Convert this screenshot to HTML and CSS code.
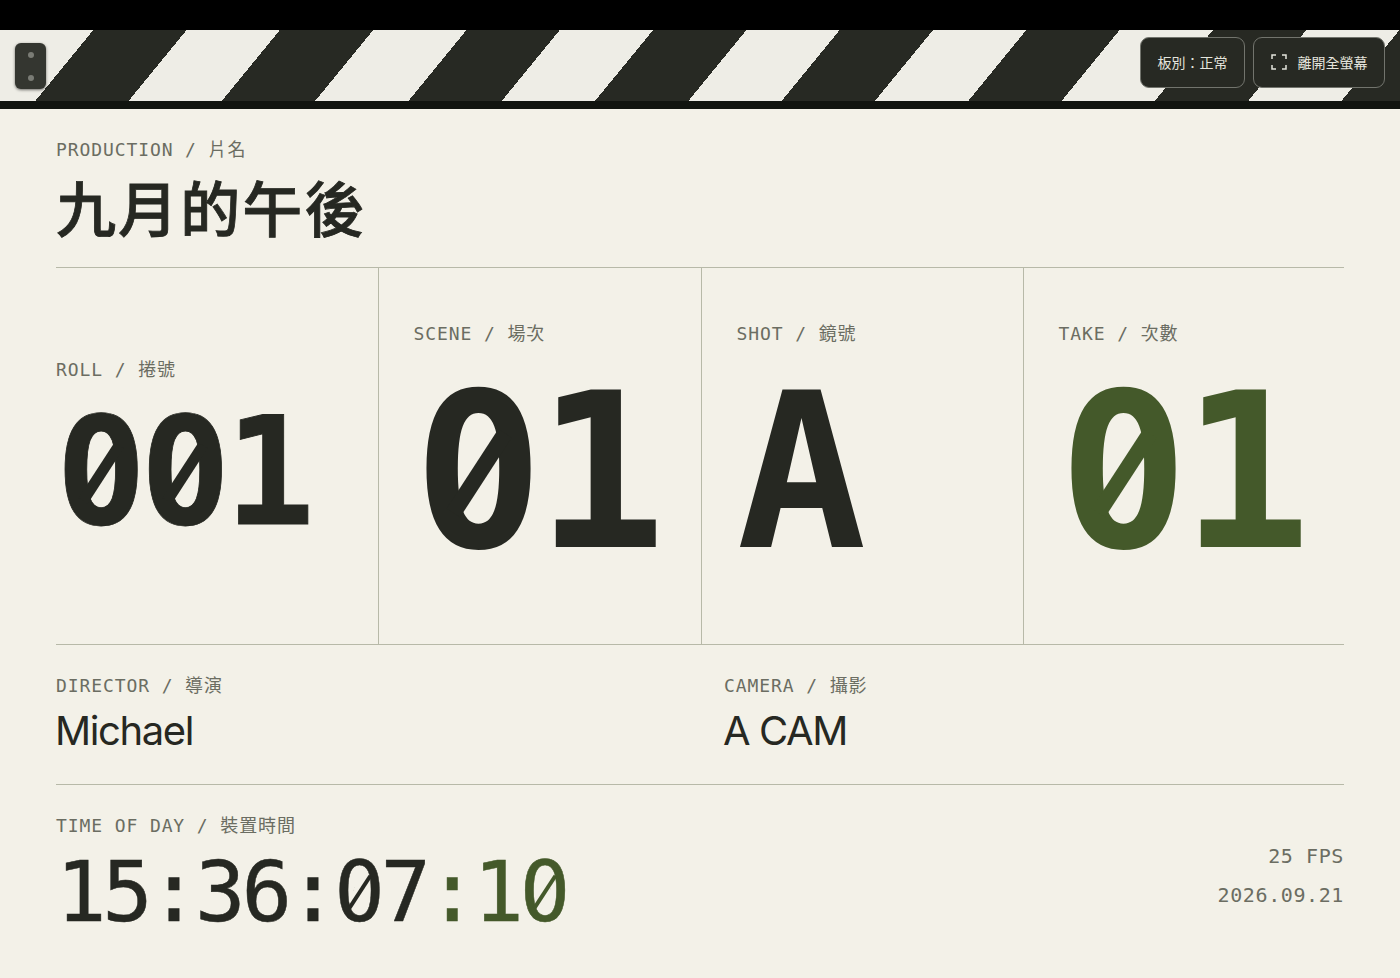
FILE: index.html
```html
<!DOCTYPE html>
<html lang="zh-Hant">
<head>
<meta charset="utf-8">
<title>Slate</title>
<link rel="stylesheet" href="styles.css">
</head>
<body>
<div class="notch"></div>
<header class="sticks">
  <div class="hinge"><span class="pin"></span><span class="pin"></span></div>
  <div class="actions">
    <button class="btn">板別：正常</button>
    <button class="btn">
      <svg class="ico" viewBox="0 0 16 16" width="16" height="16" fill="none" stroke="currentColor" stroke-width="1.5"><path d="M5 1H1v4M11 1h4v4M5 15H1v-4M11 15h4v-4"/></svg>
      離開全螢幕
    </button>
  </div>
</header>
<main class="slate">
  <section class="production">
    <div class="label">PRODUCTION / 片名</div>
    <h1 class="title">九月的午後</h1>
  </section>
  <section class="grid">
    <div class="cell first">
      <div class="label">ROLL / 捲號</div>
      <div class="num small"><span class="zero">0</span><span class="zero">0</span>1</div>
    </div>
    <div class="cell">
      <div class="label">SCENE / 場次</div>
      <div class="num"><span class="zero">0</span>1</div>
    </div>
    <div class="cell">
      <div class="label">SHOT / 鏡號</div>
      <div class="num">A</div>
    </div>
    <div class="cell">
      <div class="label">TAKE / 次數</div>
      <div class="num green"><span class="zero">0</span>1</div>
    </div>
  </section>
  <section class="crew">
    <div>
      <div class="label">DIRECTOR / 導演</div>
      <div class="name">Michael</div>
    </div>
    <div>
      <div class="label">CAMERA / 攝影</div>
      <div class="name">A CAM</div>
    </div>
  </section>
  <section class="time">
    <div>
      <div class="label">TIME OF DAY / 裝置時間</div>
      <div class="clock">15:36:<span class="zero">0</span>7<span class="green">:1<span class="zero">0</span></span></div>
    </div>
    <div class="meta">
      <div>25 FPS</div>
      <div>2026.09.21</div>
    </div>
  </section>
</main>
</body>
</html>
```
FILE: styles.css
```css
* { box-sizing: border-box; }
html, body { margin: 0; height: 100%; }
body {
  --paper: #f3f1e8;
  background: var(--paper);
  color: #262822;
  font-family: "DejaVu Sans Mono", "Noto Sans CJK TC", monospace;
  overflow: hidden;
}
.notch { height: 30px; background: #000; }
.sticks {
  height: 79px;
  border-bottom: 8px solid #11140f;
  background: repeating-linear-gradient(129.3deg, #eeede6 0, #eeede6 72.2px, #272923 72.2px, #272923 144.4px);
  display: flex;
  align-items: flex-start;
  justify-content: space-between;
  padding: 7px 15px 0 15px;
}
.hinge {
  width: 31px;
  height: 46px;
  margin-top: 6px;
  border-radius: 6px;
  background: #343630;
  box-shadow: 0 1px 3px rgba(0,0,0,.55);
  display: flex;
  flex-direction: column;
  align-items: center;
  justify-content: center;
  gap: 17px;
}
.pin { width: 6px; height: 6px; border-radius: 50%; background: #7a7c75; }
.actions { display: flex; gap: 8px; }
.btn {
  height: 51px;
  padding: 0 16.5px 2px;
  display: flex;
  align-items: center;
  gap: 11px;
  background: #272923;
  color: #e4e4dc;
  border: 1px solid #72746d;
  border-radius: 9px;
  font: 14px "Noto Sans CJK TC", sans-serif;
}
.ico { display: block; }
.slate { padding: 0 56px; }
.label {
  font-size: 18px;
  line-height: 26px;
  letter-spacing: .05em;
  color: #6b6d62;
  white-space: pre;
}
.production { padding-top: 28px; height: 158px; }
.title {
  margin: 3px 0 0;
  font: 500 60px/80px "Noto Sans CJK TC", sans-serif;
  letter-spacing: .035em;
  -webkit-text-stroke: .8px #262822;
  color: #262822;
}
.grid {
  display: grid;
  grid-template-columns: 322px 323px 322px 321px;
  height: 378px;
  border-top: 1px solid #b7b9a8;
  border-bottom: 1px solid #b7b9a8;
}
.cell {
  padding: 0 0 0 34.5px;
  border-left: 1px solid #b7b9a8;
  display: flex;
  flex-direction: column;
  justify-content: center;
}
.cell.first { border-left: 0; padding-left: 0; }
.cell .label { margin-bottom: 7px; }
.num {
  font-weight: 700;
  font-size: 216px;
  line-height: 1.1;
  letter-spacing: -.035em;
  white-space: nowrap;
}
.num.small { font-size: 150px; letter-spacing: -.04em; -webkit-text-stroke: .8px currentColor; }
.green { color: #44592a; }
.crew {
  display: grid;
  grid-template-columns: 1fr 1fr;
  gap: 48px;
  height: 140px;
  padding-top: 28px;
  border-bottom: 1px solid #b7b9a8;
}
.name {
  font: 400 40px/52px "Inter", sans-serif;
  letter-spacing: -.035em;
  margin: 6px 0 0 -1px;
}
.time {
  display: flex;
  justify-content: space-between;
  align-items: center;
  padding-top: 28px;
}
.clock {
  margin-top: 11px;
  font-size: 84px;
  line-height: 84px;
  letter-spacing: -.05em;
  -webkit-text-stroke: .5px currentColor;
  white-space: nowrap;
}
.meta {
  margin-top: 4px;
  text-align: right;
  font-size: 20px;
  line-height: 39px;
  letter-spacing: .03em;
  color: #6b6d62;
}
.zero { position: relative; display: inline-block; }
.zero::before {
  content: "";
  position: absolute;
  left: .301em;
  top: 50%;
  width: .16em;
  height: .22em;
  transform: translate(-50%, -50%);
  border-radius: 50%;
  background: var(--paper);
}
.zero::after {
  content: "";
  position: absolute;
  left: .301em;
  top: 50%;
  width: .072em;
  height: .44em;
  transform: translate(-50%, -50%) rotate(33deg);
  background: currentColor;
}
.clock .zero::after { width: .05em; height: .46em; }
```
